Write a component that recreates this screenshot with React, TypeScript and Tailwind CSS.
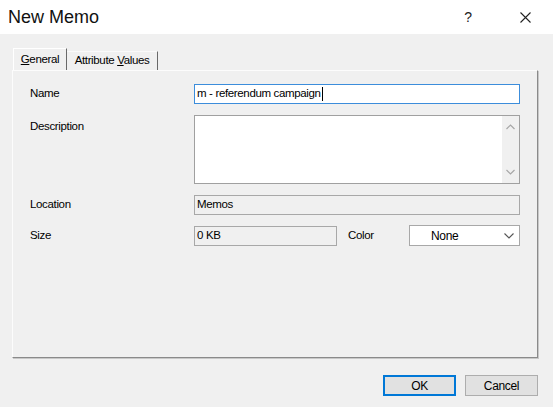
import React from 'react';

const font = { fontFamily: '"Liberation Sans", Arial, sans-serif' };

function Chevron({ dir }: { dir: 'up' | 'down' }) {
  return (
    <svg width="9" height="6" viewBox="0 0 9 6" className="block">
      <path
        d={dir === 'up' ? 'M0.5 5 L4.5 1 L8.5 5' : 'M0.5 1 L4.5 5 L8.5 1'}
        fill="none"
        stroke="#a6a6a6"
        strokeWidth="1.2"
      />
    </svg>
  );
}

export default function App() {
  return (
    <div
      className="w-[553px] h-[407px] bg-[#f0f0f0] flex flex-col text-[11.5px] tracking-[-0.35px] text-black overflow-hidden"
      style={font}
    >
      {/* Title bar */}
      <div className="h-[34px] bg-white flex items-center shrink-0 tracking-normal">
        <span className="ml-[8px] text-[18px] leading-none text-[#111]">New Memo</span>
        <span className="ml-auto mr-[48px] text-[14px] leading-none text-[#222]">?</span>
        <svg width="11" height="11" viewBox="0 0 11 11" className="mr-[22px]">
          <path d="M0.5 0.5 L10.5 10.5 M10.5 0.5 L0.5 10.5" stroke="#222" strokeWidth="1.1" />
        </svg>
      </div>

      {/* Tabs */}
      <div className="ml-[13px] mt-[14px] h-[22px] flex items-end relative z-10">
        <div className="h-[22px] w-[54px] bg-[#f0f0f0] border-l border-t border-white border-r border-r-[#696969] flex items-center justify-center pt-[1px]">
          <span><span className="underline">G</span>eneral</span>
        </div>
        <div className="h-[19px] w-[91px] border-t border-[#fafafa] border-r border-r-[#696969] flex items-center justify-center">
          <span>Attribute <span className="underline">V</span>alues</span>
        </div>
      </div>

      {/* Tab page */}
      <div className="ml-[12px] w-[526px] h-[288px] border-t border-l border-[#fcfcfc] border-r border-b border-r-[#8a8a8a] border-b-[#8a8a8a] shadow-[1px_1px_0_#c8c8c8] pl-[17px] pt-[13px] flex flex-col">
        <div className="flex items-center h-[20px]">
          <span className="w-[164px]">Name</span>
          <div className="w-[326px] h-[20px] bg-white border border-[#3c8ddb] flex items-center pl-[2px]">
            m - referendum campaign<span className="inline-block w-px h-[14px] bg-black ml-px" />
          </div>
        </div>

        <div className="flex items-start mt-[11px]">
          <span className="w-[164px] pt-[3px]">Description</span>
          <div className="w-[326px] h-[69px] bg-white border border-[#a0a0a0] flex justify-end">
            <div className="w-[17px] bg-[#f0f0f0] flex flex-col items-center justify-between py-[8px]">
              <Chevron dir="up" />
              <Chevron dir="down" />
            </div>
          </div>
        </div>

        <div className="flex items-center mt-[11px]">
          <span className="w-[164px]">Location</span>
          <div className="w-[326px] h-[20px] border border-[#a8a8a8] flex items-center pl-[2px]">
            Memos
          </div>
        </div>

        <div className="flex items-center mt-[10px]">
          <span className="w-[164px]">Size</span>
          <div className="w-[143px] h-[20px] border border-[#a8a8a8] flex items-center pl-[2px]">
            0 KB
          </div>
          <span className="ml-[11px] w-[61px]">Color</span>
          <div className="w-[111px] h-[21px] bg-white border border-[#a8a8a8] flex items-center">
            <span className="ml-[21px] text-[12px]">None</span>
            <svg width="10" height="6" viewBox="0 0 10 6" className="ml-auto mr-[5px]">
              <path d="M0.5 0.5 L5 5 L9.5 0.5" fill="none" stroke="#555" strokeWidth="1.1" />
            </svg>
          </div>
        </div>
      </div>

      {/* Buttons */}
      <div className="flex justify-end gap-[9px] mt-[17px] mr-[15px]">
        <button className="w-[73px] h-[21px] bg-[#e1e1e1] border-2 border-[#0078d7] text-[12px] leading-none">
          OK
        </button>
        <button className="w-[73px] h-[21px] bg-[#e1e1e1] border border-[#adadad] text-[12px] leading-none">
          Cancel
        </button>
      </div>
    </div>
  );
}
